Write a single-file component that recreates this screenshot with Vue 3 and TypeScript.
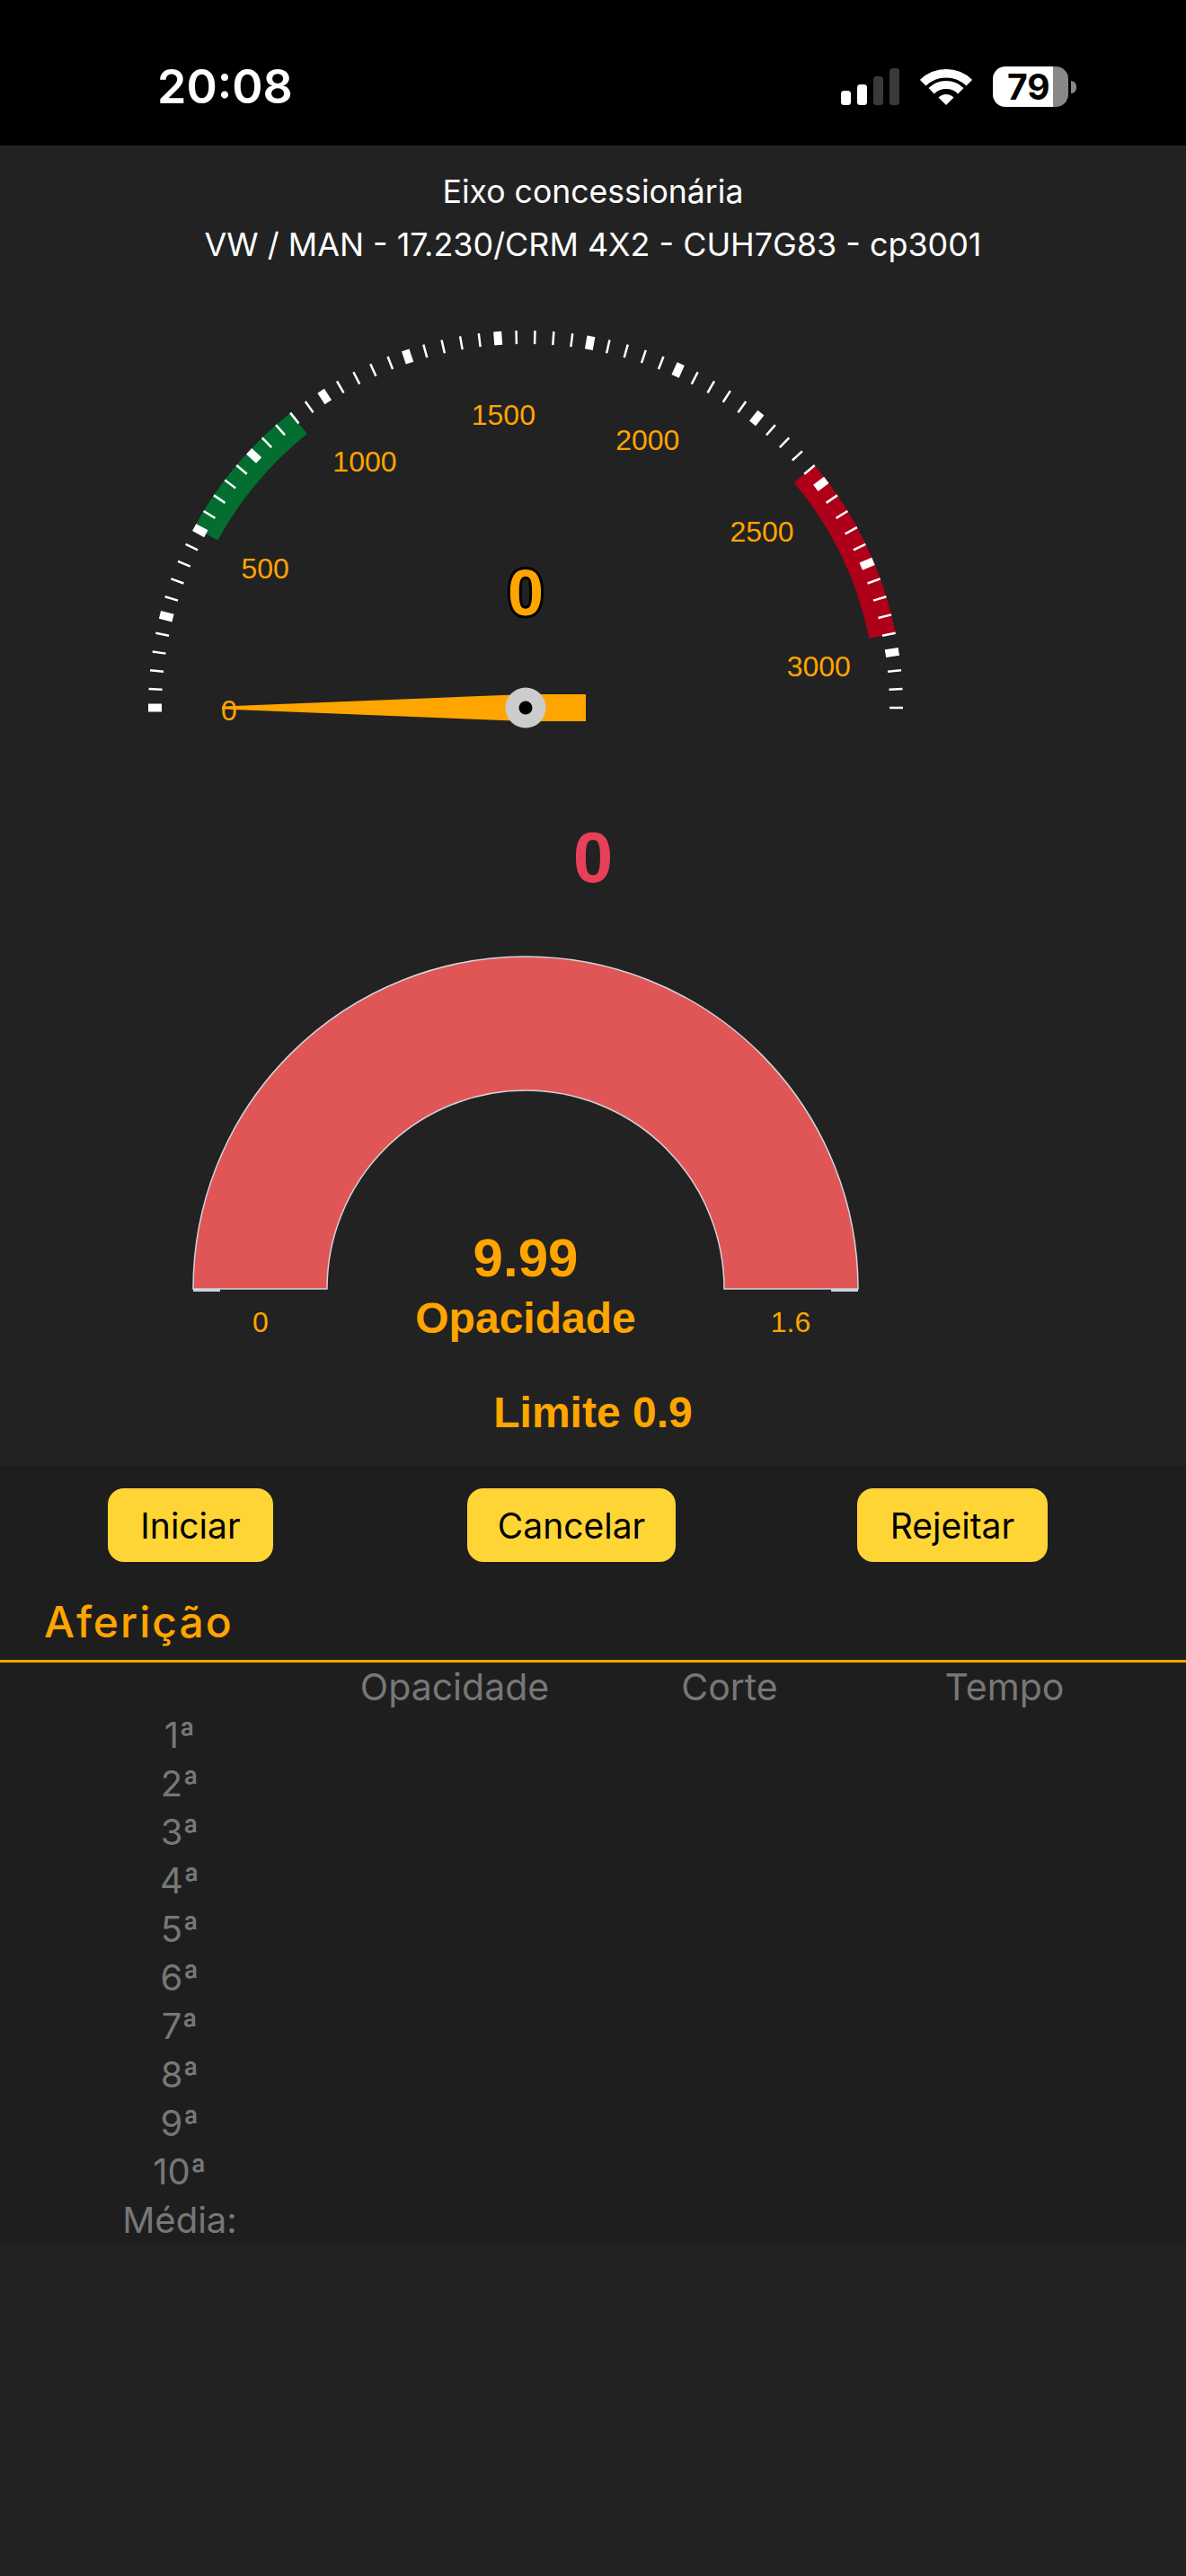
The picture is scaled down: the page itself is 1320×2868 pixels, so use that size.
<script setup lang="ts">
import { computed } from 'vue';

const cx = 585;
const cy = 788;
const maxRpm = 3150;

const toPoint = (rpm: number, radius: number) => {
  const angle = Math.PI - (rpm / maxRpm) * Math.PI;
  return { x: cx + radius * Math.cos(angle), y: cy - radius * Math.sin(angle) };
};

const ticks = computed(() => {
  const list = [];
  for (let rpm = 0; rpm <= maxRpm; rpm += 50) {
    const a = toPoint(rpm, 405);
    const b = toPoint(rpm, 420);
    list.push({ rpm, x1: a.x, y1: a.y, x2: b.x, y2: b.y, major: rpm % 250 === 0 });
  }
  return list;
});

const labels = computed(() =>
  [0, 500, 1000, 1500, 2000, 2500, 3000].map((rpm) => {
    const p = toPoint(rpm, 330);
    return { rpm, x: p.x, y: p.y + 14 };
  })
);

const band = (from: number, to: number) => {
  const a = toPoint(from, 420);
  const b = toPoint(to, 420);
  const c = toPoint(to, 390);
  const d = toPoint(from, 390);
  return `M${a.x} ${a.y}A420 420 0 0 1 ${b.x} ${b.y}L${c.x} ${c.y}A390 390 0 0 0 ${d.x} ${d.y}Z`;
};

const buttons = [
  { label: 'Iniciar', width: 184 },
  { label: 'Cancelar', width: 232 },
  { label: 'Rejeitar', width: 212 },
];

const rows = ['1ª', '2ª', '3ª', '4ª', '5ª', '6ª', '7ª', '8ª', '9ª', '10ª', 'Média:'];
</script>

<template>
  <div class="page">
    <div class="status">
      <span class="time">20:08</span>
      <div class="status-icons">
        <svg class="signal" width="65" height="41" viewBox="0 0 65 41">
          <rect x="0" y="25" width="11" height="16" rx="3.5" fill="#fff" />
          <rect x="18" y="18" width="11" height="23" rx="3.5" fill="#fff" />
          <rect x="36" y="9" width="11" height="32" rx="3.5" fill="#3a3a3a" />
          <rect x="54" y="0" width="11" height="41" rx="3.5" fill="#3a3a3a" />
        </svg>
        <svg class="wifi" width="58" height="42" viewBox="0 0 58 42">
          <path d="M3.2 17.2A37 37 0 0 1 54.8 17.2" fill="none" stroke="#fff" stroke-width="9.5" />
          <path d="M12.6 26.2A23.5 23.5 0 0 1 45.4 26.2" fill="none" stroke="#fff" stroke-width="9" />
          <path d="M20.5 33.5A12 12 0 0 1 37.5 33.5L29 42Z" fill="#fff" />
        </svg>
        <div class="battery">
          <div class="battery-body">
            <span class="battery-level">79</span>
          </div>
          <span class="battery-nub"></span>
        </div>
      </div>
    </div>

    <div class="vehicle">
      <p>Eixo concessionária</p>
      <p class="vehicle-name">VW / MAN - 17.230/CRM 4X2 - CUH7G83 - cp3001</p>
    </div>

    <svg class="rpm" width="1320" height="530" viewBox="0 320 1320 530">
      <path :d="band(500, 900)" fill="#036e30" />
      <path :d="band(2450, 2950)" fill="#ae0019" />
      <line
        v-for="tick in ticks"
        :key="tick.rpm"
        :x1="tick.x1"
        :y1="tick.y1"
        :x2="tick.x2"
        :y2="tick.y2"
        stroke="#fff"
        :stroke-width="tick.major ? 9 : 2.5"
      />
      <text
        v-for="label in labels"
        :key="label.rpm"
        :x="label.x"
        :y="label.y"
        class="rpm-label"
        text-anchor="middle"
      >{{ label.rpm }}</text>
      <text x="585" y="685" class="rpm-value" text-anchor="middle">0</text>
      <polygon points="247,786.5 585,773 652,773 652,803 585,803 247,789.5" fill="#ffa500" />
      <circle cx="585" cy="788" r="22.5" fill="#ccc" />
      <circle cx="585" cy="788" r="7.5" fill="#000" />
    </svg>

    <div class="opacity-value">0</div>

    <svg class="opacity" width="1320" height="470" viewBox="0 1040 1320 470">
      <rect x="215" y="1435" width="30" height="3" fill="#c9d2e6" />
      <rect x="925" y="1435" width="30" height="3" fill="#c9d2e6" />
      <path
        d="M215 1435A370 370 0 0 1 955 1435H806A221 221 0 0 0 364 1435Z"
        fill="#e05656"
        stroke="#d4d4d8"
        stroke-width="1.5"
      />
      <text x="585" y="1421" class="gauge-value" text-anchor="middle">9.99</text>
      <text x="585" y="1484" class="gauge-title" text-anchor="middle">Opacidade</text>
      <text x="290" y="1483" class="gauge-range" text-anchor="middle">0</text>
      <text x="880" y="1483" class="gauge-range" text-anchor="middle">1.6</text>
    </svg>

    <div class="limit">Limite 0.9</div>

    <section class="measure">
      <div class="actions">
        <button v-for="button in buttons" :key="button.label" type="button" :style="{ width: button.width + 'px' }">
          {{ button.label }}
        </button>
      </div>
      <h2 class="section-title">Aferição</h2>
      <div class="table">
        <span></span>
        <span class="head">Opacidade</span>
        <span class="head">Corte</span>
        <span class="head">Tempo</span>
        <template v-for="row in rows" :key="row">
          <span>{{ row }}</span>
          <span></span>
          <span></span>
          <span></span>
        </template>
      </div>
    </section>
  </div>
</template>

<style>
html,
body {
  margin: 0;
  background: #222;
}
</style>

<style scoped>
.page {
  width: 1320px;
  height: 2868px;
  background: #222;
  overflow: hidden;
  font-family: Inter, 'Liberation Sans', sans-serif;
}

.status {
  height: 162px;
  background: #000;
  display: flex;
  align-items: flex-start;
  justify-content: space-between;
  padding: 74px 122px 0 175px;
  box-sizing: border-box;
}

.time {
  color: #fff;
  font-size: 52px;
  font-weight: 600;
  line-height: 46px;
}

.status-icons {
  display: flex;
  align-items: flex-start;
  gap: 23px;
}

.signal {
  margin-top: 2px;
}

.wifi {
  margin-top: 1px;
}

.battery {
  display: flex;
  align-items: center;
  gap: 3px;
}

.battery-body {
  width: 84px;
  height: 45px;
  border-radius: 14px;
  background: linear-gradient(90deg, #fff 0, #fff 67px, #888 67px);
  display: flex;
  align-items: center;
  padding-left: 16px;
  box-sizing: border-box;
}

.battery-level {
  color: #000;
  font-size: 39px;
  font-weight: 700;
  line-height: 45px;
}

.battery-nub {
  width: 6px;
  height: 14px;
  border-radius: 0 7px 7px 0;
  background: #888;
}

.vehicle {
  height: 158px;
  padding-top: 22px;
  box-sizing: border-box;
  text-align: center;
  color: #fff;
  font-size: 35.6px;
  line-height: 59px;
}

.vehicle p {
  margin: 0;
}

.vehicle .vehicle-name {
  font-size: 35.9px;
}

.rpm,
.opacity {
  display: block;
}

.rpm-label {
  fill: #ffa500;
  font-family: 'Liberation Sans', Arial, sans-serif;
  font-size: 32px;
}

.rpm-value {
  fill: #ffa500;
  stroke: #000;
  stroke-width: 6px;
  paint-order: stroke;
  font-family: 'Liberation Sans', Arial, sans-serif;
  font-size: 72px;
  font-weight: 700;
}

.opacity-value {
  height: 190px;
  padding-top: 20px;
  box-sizing: border-box;
  text-align: center;
  color: #e8405a;
  font-family: 'Liberation Sans', Arial, sans-serif;
  font-size: 80px;
  font-weight: 700;
  line-height: 170px;
}

.gauge-value {
  fill: #ffa500;
  font-family: 'Liberation Sans', Arial, sans-serif;
  font-size: 60px;
  font-weight: 700;
}

.gauge-title {
  fill: #ffa500;
  font-family: 'Liberation Sans', Arial, sans-serif;
  font-size: 48px;
  font-weight: 700;
}

.gauge-range {
  fill: #ffa500;
  font-family: 'Liberation Sans', Arial, sans-serif;
  font-size: 32px;
}

.limit {
  height: 122px;
  padding-top: 30px;
  box-sizing: border-box;
  text-align: center;
  color: #ffa500;
  font-family: 'Liberation Sans', Arial, sans-serif;
  font-size: 48px;
  font-weight: 700;
  line-height: 66px;
}

.measure {
  background: #1e1e1e;
  height: 866px;
  padding-top: 25px;
  box-sizing: border-box;
}

.actions {
  display: flex;
  padding-left: 120px;
  gap: 216px;
}

.actions button {
  height: 82px;
  padding: 0;
  border: none;
  border-radius: 18px;
  background: #ffd535;
  color: #000;
  font-family: inherit;
  font-size: 39px;
  font-weight: 400;
}

.actions button:last-child {
  margin-left: -14px;
}

.section-title {
  margin: 0;
  padding: 37px 0 0 49px;
  height: 112px;
  box-sizing: border-box;
  border-bottom: 3px solid #ffa500;
  color: #ffa500;
  font-size: 48px;
  font-weight: 500;
  letter-spacing: 2px;
  line-height: 60px;
}

.table {
  display: grid;
  grid-template-columns: repeat(4, 306px);
  grid-auto-rows: 54px;
  padding: 0 0 0 47px;
  color: #777;
  font-size: 40px;
  line-height: 54px;
  text-align: center;
}

.head {
  font-size: 41px;
}
</style>
